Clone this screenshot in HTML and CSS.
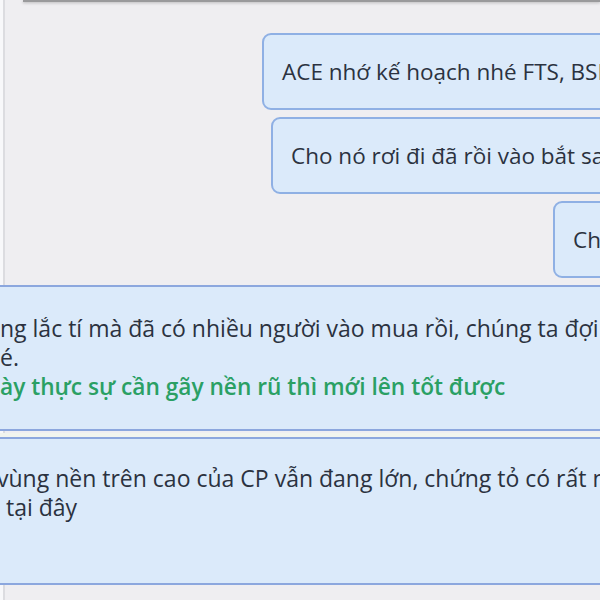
FILE: index.html
```html
<!DOCTYPE html>
<html lang="vi">
<head>
<meta charset="utf-8">
<link rel="stylesheet" href="styles.css">
</head>
<body>
<div class="frame">
  <div class="topbar"></div>
  <div class="chat">
    <div class="bubble b1">ACE nhớ kế hoạch nhé FTS, BSI</div>
    <div class="bubble b2">Cho nó rơi đi đã rồi vào bắt sau</div>
    <div class="bubble b3">Chờ</div>
  </div>
  <div class="note n1">
    <p class="line">ng lắc tí mà đã có nhiều người vào mua rồi, chúng ta đợi</p>
    <p class="line">é.</p>
    <p class="line green">ày thực sự cần gãy nền rũ thì mới lên tốt được</p>
  </div>
  <div class="note n2">
    <p class="line cut">vùng nền trên cao của CP vẫn đang lớn, chứng tỏ có rất nhiều</p>
    <p class="line">&nbsp;tại đây</p>
  </div>
</div>
</body>
</html>
```

FILE: styles.css
```css
html, body {
  margin: 0;
  padding: 0;
  width: 600px;
  height: 600px;
  overflow: hidden;
  background: #efeef1;
}
body {
  font-family: "Open Sans", "Noto Sans", sans-serif;
  font-size: 22.5px;
  color: #2b3240;
}
.frame {
  height: 600px;
  border-left: 3px solid #f8f8fa;
  box-shadow: inset 5px 0 0 -3px #dcdce0;
}
.topbar {
  height: 2px;
  margin-left: 20px;
  background: #9a9a9c;
  box-shadow: 0 1px 3px rgba(0,0,0,0.25);
}
.chat {
  display: flex;
  flex-direction: column;
  align-items: flex-start;
  gap: 7px;
  margin-top: 31px;
}
.bubble {
  white-space: nowrap;
  line-height: 29px;
  padding: 22px 20px 22px 18px;
  background: #dbeafa;
  border: 2px solid #8fb0e4;
  border-radius: 9px;
}
.b1 { margin-left: 259px; }
.b2 { margin-left: 268px; }
.b3 { margin-left: 550px; }
.note {
  background: #dbeafa;
  border-top: 2px solid #8ca7de;
  border-bottom: 2px solid #8ca7de;
  margin-left: -3px;
  white-space: nowrap;
  font-size: 23px;
}
.n1 {
  margin-top: 7px;
  padding: 27px 0 28px 0;
}
.n2 {
  margin-top: 6px;
  padding: 25px 0 61px 0;
  box-shadow: 0 -4px 0 0 #f1f4ee;
}
.line {
  margin: 0;
  line-height: 29px;
}
.cut { margin-left: -3px; }
.green {
  color: #2aa064;
  font-weight: 600;
  font-size: 22.7px;
}
```
